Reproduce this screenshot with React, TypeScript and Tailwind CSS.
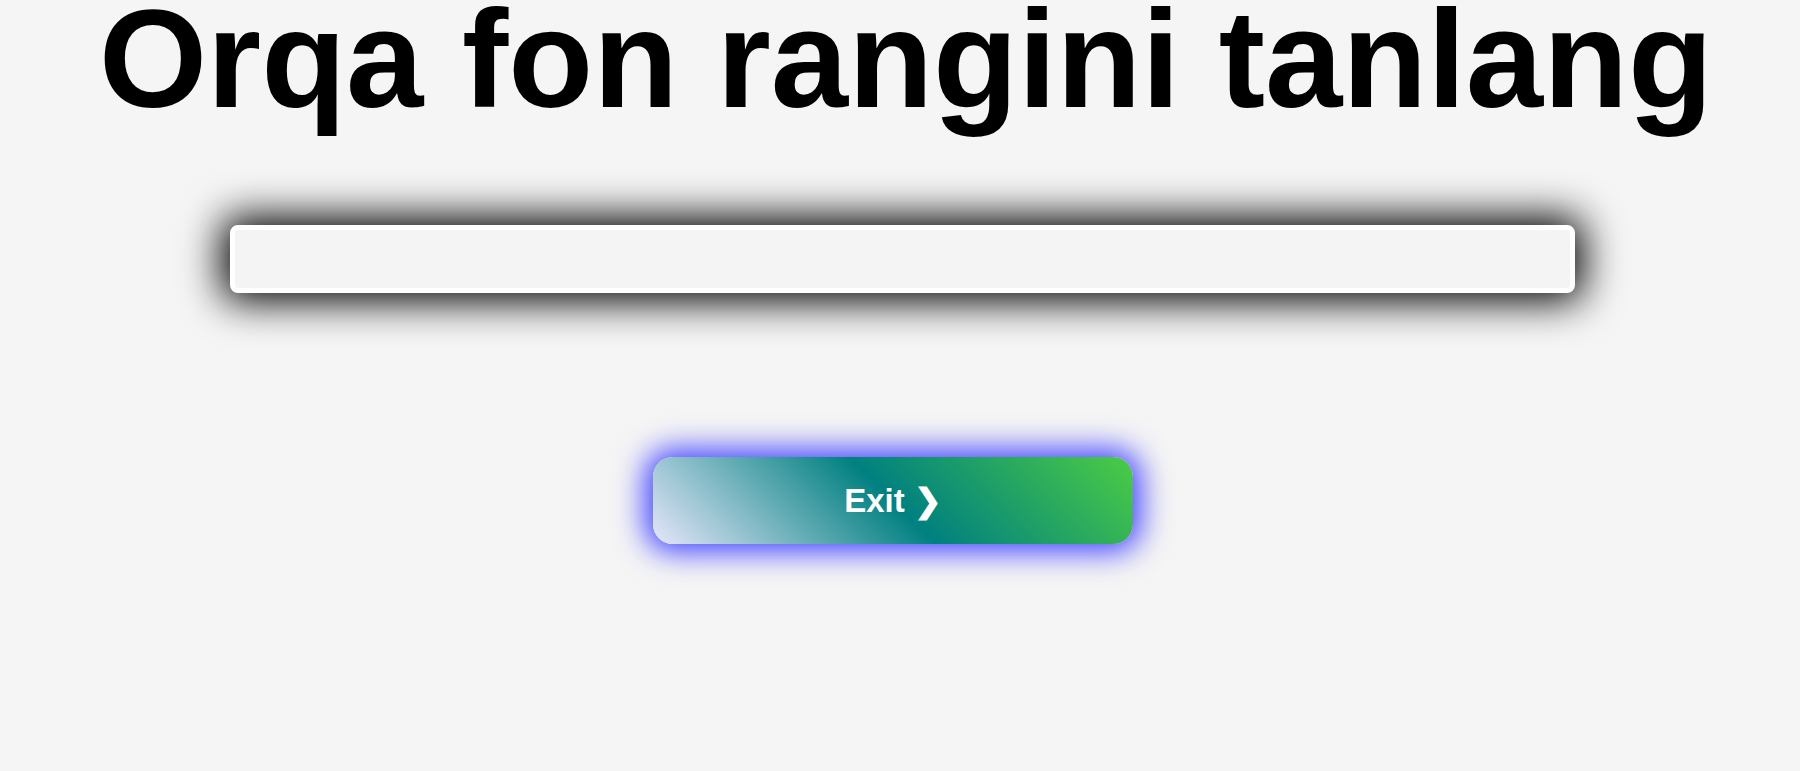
export default function App() {
  return (
    <main className="min-h-screen bg-[#f5f5f5] flex flex-col items-center font-['Liberation_Sans',Arial,sans-serif]">
      <h1 className="ml-[12px] text-[139px] font-bold leading-[0.85] text-black whitespace-nowrap">
        Orqa fon rangini tanlang
      </h1>

      {/* colour picker input */}
      <input
        type="text"
        className="ml-[5px] mt-[107px] w-[1345px] h-[68px] rounded-[8px] border-[5px] border-white bg-[#f4f4f4] shadow-[0_0_40px_8px_#000] outline-none"
      />

      <button className="mr-[14px] mt-[164px] w-[480px] h-[87px] rounded-[20px] bg-[linear-gradient(45deg,lavender,teal,#4ccc44)] text-white text-[33px] font-bold shadow-[0_0_30px_8px_#4444ff]">
        Exit ❯
      </button>
    </main>
  );
}
